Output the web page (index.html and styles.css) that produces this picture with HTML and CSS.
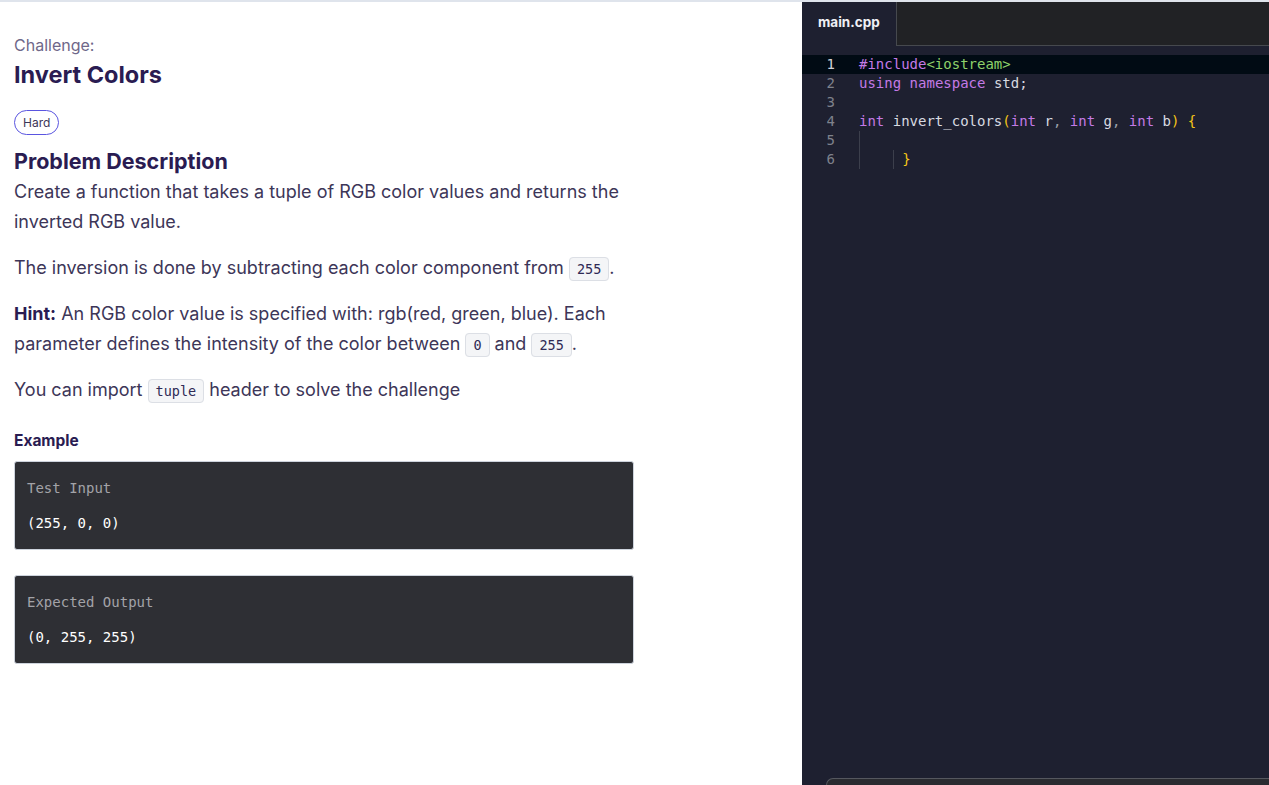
FILE: index.html
```html
<!DOCTYPE html>
<html lang="en">
<head>
<meta charset="utf-8">
<title>Invert Colors</title>
<link rel="stylesheet" href="styles.css">
</head>
<body>
<div class="page">
  <main class="problem">
    <div class="eyebrow">Challenge:</div>
    <h1 class="title">Invert Colors</h1>
    <span class="badge">Hard</span>
    <h2 class="section">Problem Description</h2>
    <p class="para first">Create a function that takes a tuple of RGB color values and returns the inverted RGB value.</p>
    <p class="para">The inversion is done by subtracting each color component from <code class="ic">255</code>.</p>
    <p class="para"><strong>Hint:</strong> An RGB color value is specified with: rgb(red, green, blue). Each parameter defines the intensity of the color between <code class="ic">0</code> and <code class="ic">255</code>.</p>
    <p class="para">You can import <code class="ic">tuple</code> header to solve the challenge</p>
    <h3 class="example-title">Example</h3>
    <div class="io-box">
      <div class="io-label">Test Input</div>
      <div class="io-value">(255, 0, 0)</div>
    </div>
    <div class="io-box">
      <div class="io-label">Expected Output</div>
      <div class="io-value">(0, 255, 255)</div>
    </div>
  </main>
  <section class="editor">
    <div class="tabbar">
      <div class="tab">main.cpp</div>
      <div class="tab-rest"></div>
    </div>
    <div class="code">
      <div class="line current"><span class="ln">1</span><span class="src"><span class="kw">#include</span><span class="str">&lt;iostream&gt;</span></span></div>
      <div class="line"><span class="ln">2</span><span class="src"><span class="kw">using</span> <span class="kw">namespace</span> std;</span></div>
      <div class="line"><span class="ln">3</span><span class="src"></span></div>
      <div class="line"><span class="ln">4</span><span class="src"><span class="kw">int</span> invert_colors<span class="br">(</span><span class="kw">int</span> r<span class="pn">,</span> <span class="kw">int</span> g<span class="pn">,</span> <span class="kw">int</span> b<span class="br">)</span> <span class="br">{</span></span></div>
      <div class="line"><span class="ln">5</span><span class="src"><span class="guide"></span></span></div>
      <div class="line"><span class="ln">6</span><span class="src"><span class="guide"></span><span class="indent"><span class="guide"></span></span> <span class="br">}</span></span></div>
    </div>
    <div class="console"></div>
  </section>
</div>
</body>
</html>
```

FILE: styles.css
```css
* { box-sizing: border-box; }
html, body { margin: 0; padding: 0; height: 100%; }
body {
  font-family: "Inter", "Noto Sans", sans-serif;
  background: #ffffff;
  color: #3d3658;
  overflow: hidden;
}
.page {
  display: flex;
  height: 785px;
  border-top: 2px solid #dfe4ec;
}
.problem {
  width: 802px;
  flex: none;
  padding: 33px 0 0 14px;
}
.problem > * { max-width: 622px; }
.eyebrow {
  font-size: 16px;
  color: #6f6789;
  line-height: 20px;
}
.title {
  margin: 5px 0 0;
  font-size: 23.5px;
  line-height: 30px;
  font-weight: 700;
  color: #2a1c52;
}
.badge {
  display: inline-block;
  margin-top: 20px;
  padding: 0 8px;
  height: 25px;
  line-height: 23px;
  border: 1px solid #5a55e0;
  border-radius: 13px;
  font-size: 12px;
  color: #3d3658;
}
.section {
  margin: 12px 0 0;
  font-size: 21.5px;
  line-height: 28px;
  font-weight: 700;
  color: #2a1c52;
}
.para {
  margin: 16px 0 0;
  font-size: 18px;
  line-height: 30px;
}
.para.first { margin-top: 2px; }
.para strong { font-weight: 700; color: #2a1c52; }
.ic {
  font-family: "DejaVu Sans Mono", monospace;
  font-size: 13.5px;
  line-height: 1;
  color: #2f2a55;
  background: #f4f5f7;
  border: 1px solid #dcdfe5;
  border-radius: 4px;
  padding: 3px 7px;
}
.example-title {
  margin: 26px 0 0;
  font-size: 15.5px;
  line-height: 20px;
  font-weight: 700;
  color: #2a1c52;
}
.io-box {
  width: 620px;
  height: 89px;
  margin-top: 10px;
  background: #2e2f34;
  border: 1px solid #cdd3dc;
  border-radius: 3px;
  padding: 17px 0 0 12px;
  font-family: "DejaVu Sans Mono", monospace;
  font-size: 14px;
}
.io-box + .io-box { margin-top: 25px; }
.io-label { color: #a3a3a8; line-height: 18px; }
.io-value { color: #ffffff; margin-top: 17px; line-height: 18px; }

.editor {
  flex: 1;
  display: flex;
  flex-direction: column;
  background: #1e2030;
}
.tabbar {
  display: flex;
  height: 44px;
  flex: none;
}
.tab {
  width: 94px;
  padding: 12px 0 0 16px;
  font-family: "Inter", sans-serif;
  font-weight: 700;
  font-size: 13.5px;
  color: #f0f0f5;
}
.tab-rest {
  flex: 1;
  background: #212225;
  border-left: 1px solid #46494e;
  border-bottom: 1px solid #46494e;
}
.code {
  flex: 1;
  padding-top: 9px;
  font-family: "DejaVu Sans Mono", monospace;
  font-size: 14px;
  color: #d8dae0;
}
.line {
  display: flex;
  height: 19px;
  line-height: 19px;
}
.line.current { background: #010b14; }
.ln {
  width: 33px;
  text-align: right;
  color: #7e828c;
  flex: none;
}
.line.current .ln { color: #d0d2d8; }
.src {
  margin-left: 24px;
  white-space: pre;
  display: block;
}
.kw { color: #c47ae6; }
.str { color: #8fd16a; }
.br { color: #f5c518; }
.pn { color: #9aa0aa; }
.guide {
  display: inline-block;
  width: 1px;
  height: 19px;
  vertical-align: top;
  background: #3c3f4c;
}
.indent {
  display: inline-block;
  width: 33.7px;
  height: 19px;
  vertical-align: top;
  text-align: right;
}
.console {
  flex: none;
  height: 7px;
  margin-left: 24px;
  background: #2a2b30;
  border-top: 1px solid #55575e;
  border-left: 1px solid #55575e;
  border-top-left-radius: 10px;
}
```
